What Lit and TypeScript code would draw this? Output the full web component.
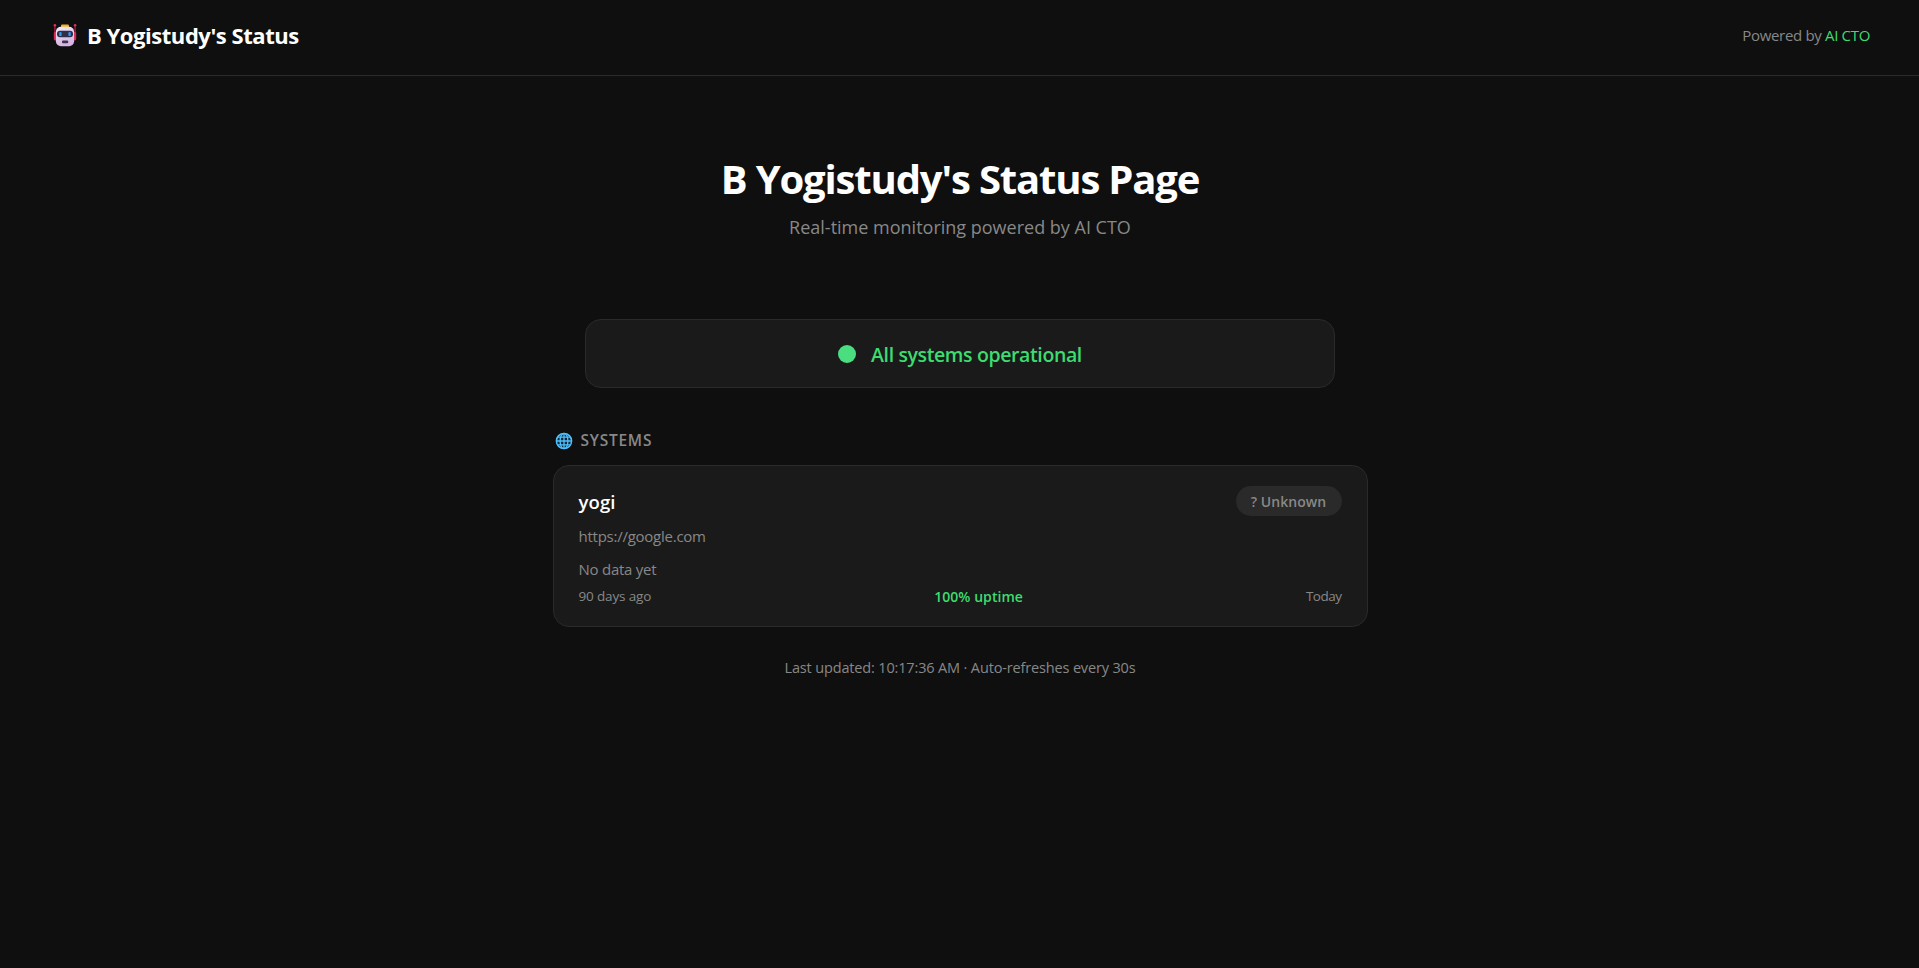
import { LitElement, html, css } from "lit";
import { customElement, property } from "lit/decorators.js";

interface System {
  name: string;
  url: string;
  status: string;
  history: string;
  uptime: number;
}

const SYSTEMS: System[] = [
  {
    name: "yogi",
    url: "https://google.com",
    status: "? Unknown",
    history: "No data yet",
    uptime: 100,
  },
];

@customElement("robot-icon")
class RobotIcon extends LitElement {
  static styles = css`
    :host {
      display: block;
      width: 24px;
      height: 24px;
    }
    svg {
      display: block;
    }
  `;

  render() {
    return html`
      <svg width="24" height="24" viewBox="0 0 24 24">
        <defs>
          <linearGradient id="face" x1="0" y1="0" x2="0.3" y2="1">
            <stop offset="0" stop-color="#f3eaf6" />
            <stop offset="1" stop-color="#d3b4e2" />
          </linearGradient>
        </defs>
        <path d="M1.9 2v15M22.1 2v15" stroke="#b51e48" stroke-width="1.3" />
        <circle cx="1.9" cy="2.2" r="1.3" fill="#e0305c" />
        <circle cx="22.1" cy="2.2" r="1.3" fill="#e0305c" />
        <rect x="0.8" y="9" width="3" height="8.4" rx="1.3" fill="#d42a55" />
        <rect x="20.2" y="9" width="3" height="8.4" rx="1.3" fill="#d42a55" />
        <rect x="8" y="1.6" width="8" height="4" rx="1.2" fill="#f2b32c" />
        <rect x="2.9" y="3.8" width="18.2" height="19.4" rx="5" fill="url(#face)" />
        <rect x="4" y="7.8" width="16" height="6.4" rx="3" fill="#2f3048" />
        <rect x="6.2" y="8.9" width="2.4" height="4.2" rx="1.2" fill="#2f9bee" />
        <rect x="15.4" y="8.9" width="2.4" height="4.2" rx="1.2" fill="#2f9bee" />
        <rect x="9" y="17.4" width="6.2" height="2.8" rx="1" fill="#3b3450" />
      </svg>
    `;
  }
}

@customElement("globe-icon")
class GlobeIcon extends LitElement {
  static styles = css`
    :host {
      display: block;
      width: 18px;
      height: 18px;
    }
    svg {
      display: block;
    }
  `;

  render() {
    return html`
      <svg width="18" height="18" viewBox="0 0 18 18" fill="none">
        <circle cx="9" cy="9" r="8" fill="#0d2636" />
        <g stroke="#4fc0fb" stroke-width="1.3">
          <circle cx="9" cy="9" r="7.6" stroke-width="1.5" />
          <ellipse cx="9" cy="9" rx="3.9" ry="7.7" />
          <path d="M9 1.3v15.4M1.3 9h15.4M2.4 5.2h13.2M2.4 12.8h13.2" />
        </g>
      </svg>
    `;
  }
}

@customElement("system-card")
class SystemCard extends LitElement {
  @property({ attribute: false }) system!: System;

  static styles = css`
    :host {
      display: block;
      box-sizing: border-box;
      height: 162px;
      padding: 20px 25px;
      background: #1a1a1a;
      border: 1px solid #2a2a2a;
      border-radius: 16px;
      color: #888;
    }
    .top {
      display: flex;
      justify-content: space-between;
      align-items: flex-start;
      height: 37px;
    }
    .name {
      font-size: 18.5px;
      font-weight: 600;
      line-height: 32px;
      letter-spacing: 0.1px;
      color: #fff;
    }
    .badge {
      box-sizing: border-box;
      width: 106px;
      padding-top: 2px;
      border-radius: 15px;
      background: #2a2a2a;
      text-align: center;
      font-size: 14px;
      font-weight: 600;
      line-height: 28px;
      letter-spacing: 0.05px;
    }
    .url {
      font-size: 15px;
      line-height: 26px;
      letter-spacing: -0.25px;
    }
    .history {
      margin-top: 6px;
      font-size: 15px;
      line-height: 28px;
      letter-spacing: -0.25px;
    }
    .range {
      display: flex;
      justify-content: space-between;
      font-size: 13.5px;
      line-height: 26px;
      letter-spacing: -0.15px;
    }
    .uptime {
      font-size: 14px;
      font-weight: 600;
      line-height: 28px;
      letter-spacing: 0.05px;
      color: #3ddc70;
    }
    .today {
      letter-spacing: -0.5px;
    }
  `;

  render() {
    const s = this.system;
    return html`
      <div class="top">
        <span class="name">${s.name}</span>
        <span class="badge">${s.status}</span>
      </div>
      <div class="url">${s.url}</div>
      <div class="history">${s.history}</div>
      <div class="range">
        <span>90 days ago</span>
        <span class="uptime">${s.uptime}% uptime</span>
        <span class="today">Today</span>
      </div>
    `;
  }
}

@customElement("app-root")
class AppRoot extends LitElement {
  static styles = css`
    :host {
      display: block;
      min-height: 100vh;
      background: #0f0f0f;
      color: #fff;
      font-family: "Segoe UI", "Open Sans", "Noto Sans", sans-serif;
    }
    header {
      box-sizing: border-box;
      height: 76px;
      display: flex;
      justify-content: space-between;
      align-items: center;
      padding: 0 49px 5px 53px;
      border-bottom: 1px solid #2a2a2a;
    }
    .brand {
      display: flex;
      align-items: center;
      gap: 10px;
      font-size: 22px;
      font-weight: 700;
      line-height: 30px;
      letter-spacing: -0.45px;
    }
    .powered {
      font-size: 15px;
      line-height: 22px;
      letter-spacing: -0.33px;
      color: #888;
    }
    .powered a {
      color: #3ddc70;
      text-decoration: none;
    }
    main {
      padding-left: 1px;
    }
    .hero {
      padding-top: 76px;
      text-align: center;
    }
    h1 {
      margin: 0;
      font-size: 40px;
      font-weight: 700;
      line-height: 54px;
      letter-spacing: -1.15px;
    }
    .hero p {
      margin: 8px 0 0;
      font-size: 18px;
      line-height: 26px;
      color: #888;
    }
    .banner {
      box-sizing: border-box;
      display: flex;
      justify-content: center;
      align-items: center;
      gap: 15px;
      width: 750px;
      height: 69px;
      margin: 79px auto 0;
      background: #1a1a1a;
      border: 1px solid #2a2a2a;
      border-radius: 16px;
      color: #3ddc70;
      font-size: 19.5px;
      font-weight: 600;
      line-height: 28px;
      letter-spacing: -0.38px;
    }
    .banner-text {
      padding-top: 2px;
    }
    .dot {
      width: 18px;
      height: 18px;
      border-radius: 50%;
      background: #4ade80;
    }
    .systems {
      width: 815px;
      margin: 0 auto;
    }
    h2 {
      display: flex;
      align-items: center;
      gap: 8px;
      margin: 39px 0 11px;
      padding-left: 2px;
      color: #888;
      font-size: 15.5px;
      font-weight: 600;
      line-height: 27px;
      letter-spacing: 0.75px;
    }
    footer {
      margin-top: 27px;
      text-align: center;
      color: #888;
      font-size: 14.5px;
      line-height: 27px;
      letter-spacing: -0.15px;
    }
  `;

  render() {
    return html`
      <header>
        <div class="brand">
          <robot-icon></robot-icon>
          <span>B Yogistudy's Status</span>
        </div>
        <div class="powered">Powered by <a href="#">AI CTO</a></div>
      </header>

      <main>
        <section class="hero">
          <h1>B Yogistudy's Status Page</h1>
          <p>Real-time monitoring powered by AI CTO</p>
        </section>

        <div class="banner">
          <span class="dot"></span>
          <span class="banner-text">All systems operational</span>
        </div>

        <section class="systems">
          <h2><globe-icon></globe-icon>SYSTEMS</h2>
          ${SYSTEMS.map((s) => html`<system-card .system=${s}></system-card>`)}
        </section>

        <footer>Last updated: 10:17:36 AM · Auto-refreshes every 30s</footer>
      </main>
    `;
  }
}
